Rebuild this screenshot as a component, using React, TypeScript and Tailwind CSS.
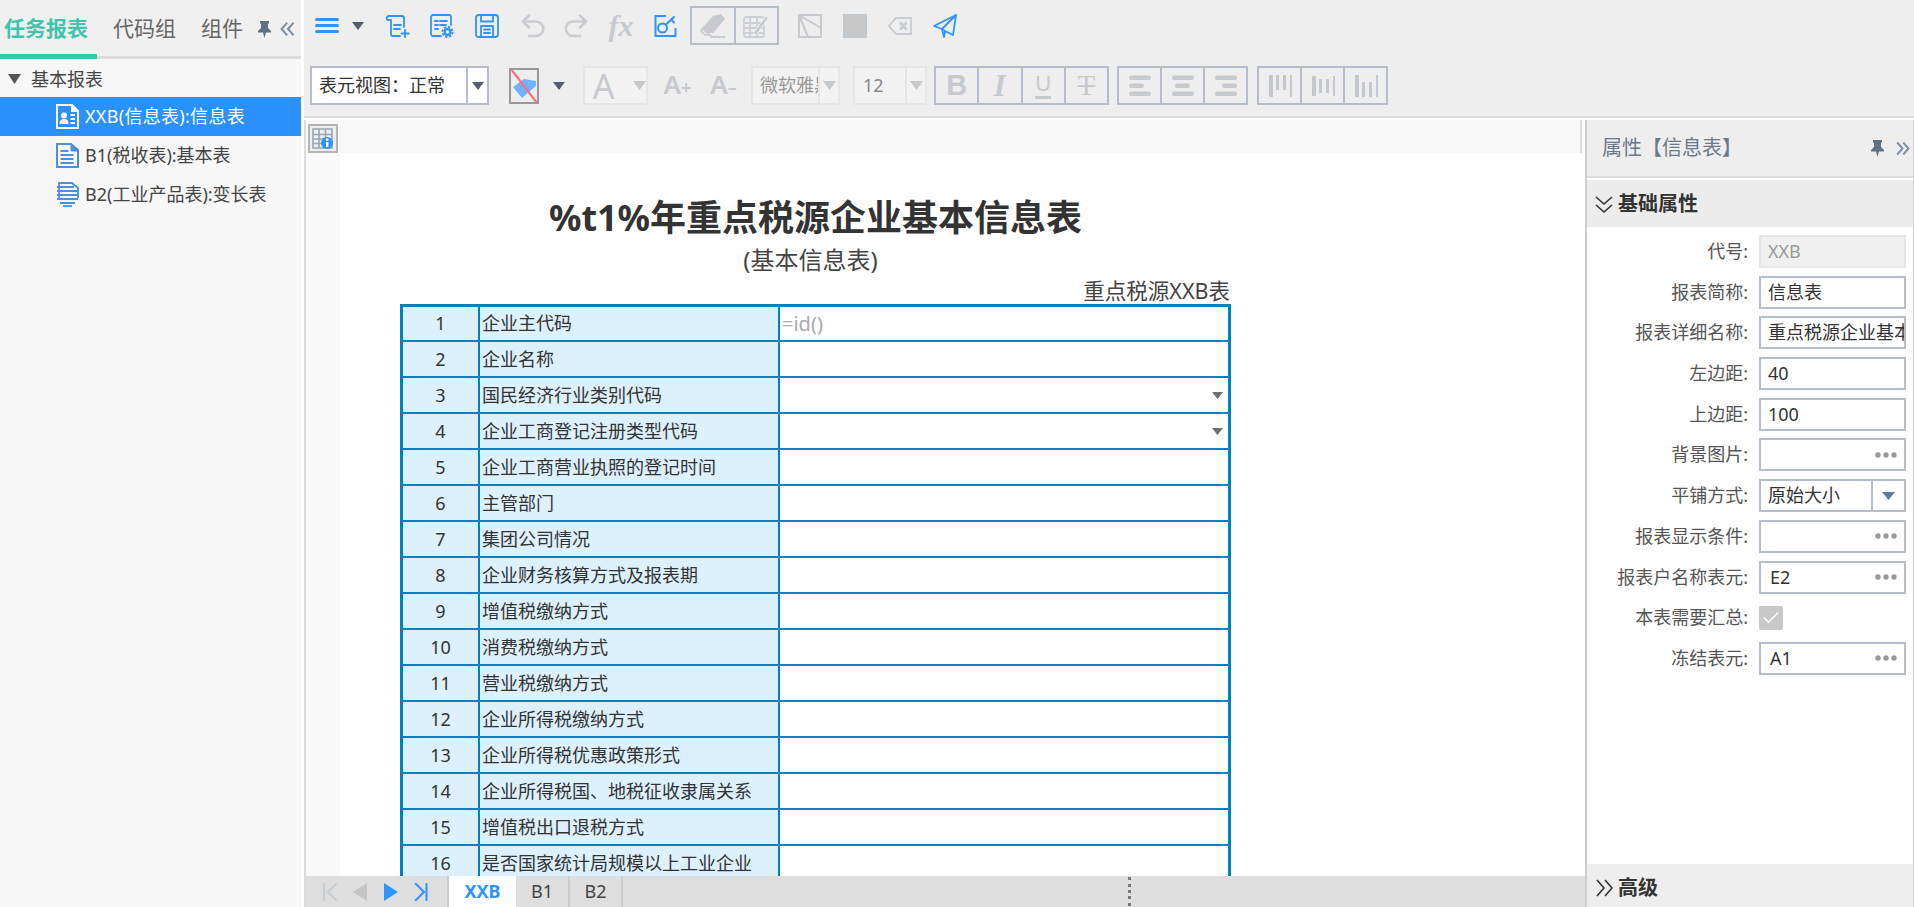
import { Check } from "lucide-react";
import type { ReactNode } from "react";

const FONT = "font-['Noto_Sans','Noto_Sans_CJK_SC',sans-serif]";
const BLUE = "#2f93ff";
const GRAY = "#c6c9cd";

const rows: [string, string, boolean][] = [
  ["企业主代码", "=id()", false],
  ["企业名称", "", false],
  ["国民经济行业类别代码", "", true],
  ["企业工商登记注册类型代码", "", true],
  ["企业工商营业执照的登记时间", "", false],
  ["主管部门", "", false],
  ["集团公司情况", "", false],
  ["企业财务核算方式及报表期", "", false],
  ["增值税缴纳方式", "", false],
  ["消费税缴纳方式", "", false],
  ["营业税缴纳方式", "", false],
  ["企业所得税缴纳方式", "", false],
  ["企业所得税优惠政策形式", "", false],
  ["企业所得税国、地税征收隶属关系", "", false],
  ["增值税出口退税方式", "", false],
  ["是否国家统计局规模以上工业企业", "", false],
];

function Tri({ color, w = 12, h = 8 }: { color: string; w?: number; h?: number }) {
  return (
    <svg width={w} height={h} viewBox="0 0 12 8" className="block shrink-0" preserveAspectRatio="none">
      <path d="M0 0h12L6 8z" fill={color} />
    </svg>
  );
}

function Pin() {
  return (
    <svg width="13" height="17" viewBox="0 0 13 17" className="block">
      <path d="M2 0h9v2L10 3v4l3 3v1.500H8L6.500 17 5 11.500H0V10l3-3V3L2 2z" fill="#5f7183" />
    </svg>
  );
}

function DoubleChevron({ dir, color, sw, size }: { dir: "left" | "right" | "down"; color: string; sw: number; size: number }) {
  const d =
    dir === "left"
      ? "M9 2 2 10l7 8M17 2l-7 8 7 8"
      : dir === "right"
        ? "M3 2l7 8-7 8M11 2l7 8-7 8"
        : "M2 3l8 7 8-7M2 11l8 7 8-7";
  return (
    <svg width={size} height={size} viewBox="0 0 20 20" fill="none" stroke={color} strokeWidth={sw} strokeLinejoin="miter" className="block shrink-0">
      <path d={d} />
    </svg>
  );
}

function Dots() {
  return (
    <svg width="22" height="6" viewBox="0 0 22 6" className="block shrink-0">
      <circle cx="3" cy="3" r="2.700" fill="#999" />
      <circle cx="11" cy="3" r="2.700" fill="#999" />
      <circle cx="19" cy="3" r="2.700" fill="#999" />
    </svg>
  );
}

function Svg24({ children, stroke = BLUE, sw = 1.8 }: { children: ReactNode; stroke?: string; sw?: number }) {
  return (
    <svg width="24" height="24" viewBox="0 0 24 24" fill="none" stroke={stroke} strokeWidth={sw} strokeLinecap="round" strokeLinejoin="round" className="block shrink-0">
      {children}
    </svg>
  );
}

function Slot({ ml, children, w = 24 }: { ml: string; children: ReactNode; w?: number }) {
  return (
    <div className={`${ml} flex items-center justify-center shrink-0`} style={{ width: w }}>
      {children}
    </div>
  );
}

function Cell({ children, last }: { children: ReactNode; last?: boolean }) {
  return (
    <div className={`flex-1 h-full flex items-center justify-center ${last ? "" : "border-r-2 border-[#b5bdcc]"}`}>
      {children}
    </div>
  );
}

function Bars({ rows: r }: { rows: [number, number][] }) {
  return (
    <svg width="24" height="24" viewBox="0 0 24 24" className="block">
      {r.map(([x, w], i) => (
        <rect key={i} x={x} y={1.500 + i * 8} width={w} height="4.500" rx="2.200" fill={GRAY} />
      ))}
    </svg>
  );
}

function VBars({ cols }: { cols: [number, number][] }) {
  return (
    <svg width="24" height="24" viewBox="0 0 24 24" className="block">
      {cols.map(([y, h], i) => (
        <rect key={i} x={1 + i * 7} y={y} width={i === 0 || i === 3 ? 4 : 3} height={h} fill="#c4c8cc" />
      ))}
    </svg>
  );
}

function PropRow({ label, children }: { label: string; children: ReactNode }) {
  return (
    <div className="flex items-center h-[33px]">
      <div className="w-[161px] text-right text-[18px] leading-[33px] text-[#555] whitespace-nowrap">{label}</div>
      <div className="ml-[11px] w-[147px] h-full">{children}</div>
    </div>
  );
}

function Input({ value, dots, pl = "pl-[7px]" }: { value?: string; dots?: boolean; pl?: string }) {
  return (
    <div className={`h-full border-2 border-[#b5bdcc] bg-white flex items-center ${pl} overflow-hidden`}>
      <span className="flex-1 text-[18px] text-[#333] whitespace-nowrap overflow-hidden">{value}</span>
      {dots && <div className="mr-[7px]"><Dots /></div>}
    </div>
  );
}

export default function App() {
  return (
    <div className={`flex h-screen w-screen overflow-hidden bg-white text-[#333] ${FONT}`}>
      {/* left sidebar */}
      <aside className="w-[301px] shrink-0 mr-[3px] bg-[#f7f7f7] flex flex-col">
        <div className="h-[59px] bg-[#f0f0f0] border-b-[3px] border-[#dcdcdc] flex relative">
          <div className="flex items-center h-[56px] pt-[2px] pl-[4px] w-full">
            <span className="text-[21px] font-bold text-[#3fc4ae] whitespace-nowrap">任务报表</span>
            <span className="ml-[25px] text-[21px] text-[#666] whitespace-nowrap">代码组</span>
            <span className="ml-[25px] text-[21px] text-[#666] whitespace-nowrap">组件</span>
            <div className="ml-[15px]"><Pin /></div>
            <div className="ml-[9px]"><DoubleChevron dir="left" color="#7f90a4" sw={2.600} size={16} /></div>
          </div>
          <div className="absolute left-0 bottom-[-3px] w-[97px] h-[5px] bg-[#3fc4ae]" />
        </div>
        <div className="h-[38px] flex items-center pl-[8px] pt-[2px]">
          <Tri color="#555" w={13} h={10} />
          <span className="ml-[10px] text-[18px] text-[#444]">基本报表</span>
        </div>
        <div className="h-[39px] bg-[#2b91ff] flex items-center pl-[56px] text-white">
          <svg width="23" height="25" viewBox="0 0 23 25" className="block shrink-0" fill="none">
            <path d="M1 1h15l6 6v17H1z" fill="#2b91ff" stroke="#fff" strokeWidth="2" />
            <path d="M15 1v7h7" fill="#fff" />
            <circle cx="8" cy="11.500" r="3" fill="#fff" />
            <path d="M3.500 20c0-4 2-5 4.500-5s4.500 1 4.500 5z" fill="#fff" />
            <path d="M14.500 11h4.500M14.500 15h4.500M14.500 19h4.500" stroke="#fff" strokeWidth="1.800" />
          </svg>
          <span className="ml-[6px] text-[18px] tracking-[0.3px] whitespace-nowrap">XXB(信息表):信息表</span>
        </div>
        <div className="h-[39px] flex items-center pl-[56px]">
          <svg width="23" height="25" viewBox="0 0 23 25" className="block shrink-0" fill="none" stroke="#4a8fe0">
            <path d="M1 1h14l7 6v17H1z" strokeWidth="2" />
            <path d="M15 1v7h7z" fill="#4a8fe0" strokeWidth="1" />
            <path d="M4.500 8h8M4.500 12h13M4.500 16h13M4.500 20h13" strokeWidth="2" />
          </svg>
          <span className="ml-[6px] text-[18px] text-[#444] whitespace-nowrap">B1(税收表):基本表</span>
        </div>
        <div className="h-[39px] flex items-center pl-[56px]">
          <svg width="23" height="25" viewBox="0 0 23 25" className="block shrink-0" fill="none" stroke="#4a8fe0">
            <path d="M3 16V1h13l6 5v10" strokeWidth="1.800" />
            <path d="M1 5h17M1 9h21M1 13h21M1 17h21M4 21h15M7 24.200h9" strokeWidth="2" />
          </svg>
          <span className="ml-[6px] text-[18px] text-[#444] whitespace-nowrap">B2(工业产品表):变长表</span>
        </div>
      </aside>

      {/* main column */}
      <div className="flex-1 min-w-0 flex flex-col">
        {/* toolbars */}
        <header className="h-[118px] shrink-0 bg-[#eee] border-b-2 border-[#dcdcdc] pt-[6px]">
          <div className="flex items-center h-[39px]">
            <Slot ml="ml-[11px]">
              <div className="w-[24px] flex flex-col gap-[2.500px]">
                <div className="h-[3.500px] bg-[#2f93ff] rounded-sm" />
                <div className="h-[3.500px] bg-[#2f93ff] rounded-sm" />
                <div className="h-[3.500px] bg-[#2f93ff] rounded-sm" />
              </div>
            </Slot>
            <Slot ml="ml-[13px]" w={12}><Tri color="#555e6e" /></Slot>
            <Slot ml="ml-[22px]">
              <Svg24>
                <path d="M3 2h13a2 2 0 0 1 2 2v9" />
                <path d="M3 2a2.200 2.200 0 0 0-1.500 3.800H5V20a2 2 0 0 0 2 2h7" />
                <path d="M8 11h7M8 15h6" />
                <path d="M19 16v7M15.500 19.500h7.500" />
              </Svg24>
            </Slot>
            <Slot ml="ml-[20px]">
              <Svg24>
                <path d="M11 22H3a2 2 0 0 1-2-2V3a2 2 0 0 1 2-2h16a2 2 0 0 1 2 2v8" />
                <path d="M5 7h3M10 7h7M5 11h3M10 11h6M5 15h3" />
                <circle cx="17.500" cy="18" r="2.800" strokeWidth="2.200" />
                <circle cx="17.500" cy="18" r="5" strokeWidth="2" strokeDasharray="2.200 1.700" strokeLinecap="butt" />
              </Svg24>
            </Slot>
            <Slot ml="ml-[21px]">
              <Svg24>
                <rect x="1" y="1" width="22" height="22" rx="2.500" />
                <path d="M6 1v6.500h12V1" />
                <path d="M6 23V12h12v11" />
                <path d="M9 15.500h6M9 19h6" />
              </Svg24>
            </Slot>
            <Slot ml="ml-[22px]">
              <Svg24 stroke="#c9ccd0" sw={2.600}>
                <path d="M8 1.500 2 7.500l6 6" />
                <path d="M2 7.500h13a7.200 7.200 0 0 1 0 14.500H8" />
              </Svg24>
            </Slot>
            <Slot ml="ml-[19px]">
              <Svg24 stroke="#c9ccd0" sw={2.600}>
                <path d="M16 1.500l6 6-6 6" />
                <path d="M22 7.500H9a7.200 7.200 0 0 0 0 14.500h7" />
              </Svg24>
            </Slot>
            <Slot ml="ml-[21px]">
              <span className="font-['Liberation_Serif',serif] italic font-bold text-[30px] leading-none text-[#c6c9cd]">fx</span>
            </Slot>
            <Slot ml="ml-[21px]">
              <Svg24 sw={2}>
                <path d="M12 2H1.500v20h20V14" strokeLinecap="butt" strokeLinejoin="miter" />
                <circle cx="8.500" cy="14" r="4.500" />
                <path d="M12 10.500 20 3M17 5.500l3 3" />
              </Svg24>
            </Slot>
            <div className="ml-[12px] w-[89px] h-[39px] border-2 border-[#b5bdcc] flex">
              <Cell>
                <svg width="28" height="28" viewBox="0 0 28 28" className="block" fill="none">
                  <path d="M14 4 22 2l4 5-12 14-5 0-6-5z" fill="#c6c9cd" />
                  <path d="M3 17l8 6H6l-4-4z" fill="#eee" stroke="#c6c9cd" strokeWidth="1.500" />
                  <path d="M11 25h15" stroke="#c6c9cd" strokeWidth="1.800" />
                </svg>
              </Cell>
              <Cell last>
                <svg width="26" height="26" viewBox="0 0 26 26" className="block" fill="none" stroke="#ccd0d4" strokeWidth="1.800">
                  <rect x="1" y="4" width="20" height="20" rx="2" />
                  <path d="M1 10h20M1 15h20M1 20h20M7 4v20M14 4v20" />
                  <path d="M11 19 23 3l2.500 2L14 21l-4 1z" fill="#c6c9cd" stroke="#eee" strokeWidth="1" />
                </svg>
              </Cell>
            </div>
            <Slot ml="ml-[19px]">
              <svg width="24" height="24" viewBox="0 0 24 24" className="block" fill="none" stroke="#c6c9cd" strokeWidth="2">
                <rect x="1" y="1" width="22" height="22" />
                <path d="M1 1 23 14M1 1l9 22M1 1l15 0" />
              </svg>
            </Slot>
            <Slot ml="ml-[21px]">
              <div className="w-[24px] h-[24px] bg-[#c8c8c8] border-2 border-[#c0c8cf]" />
            </Slot>
            <Slot ml="ml-[21px]">
              <svg width="24" height="20" viewBox="0 0 24 20" className="block" fill="none" stroke="#c8ccd0" strokeWidth="1.800">
                <path d="M8 2h15v16H8L1 10z" />
                <path d="M12 6.500l6.500 7M18.500 6.500l-6.500 7" strokeWidth="2.800" />
              </svg>
            </Slot>
            <Slot ml="ml-[21px]">
              <svg width="24" height="24" viewBox="0 0 24 24" className="block" fill="none" stroke={BLUE} strokeWidth="1.800" strokeLinejoin="round">
                <path d="M23 1 1 12l8 3 2 8 1-6 8 4z" />
                <path d="M23 1 9 15l3 2" />
              </svg>
            </Slot>
          </div>

          <div className="flex items-center h-[39px] mt-[21px]">
            {/* cell view select */}
            <div className="ml-[6px] w-[179px] h-[39px] border-2 border-[#b5bdcc] bg-white flex items-center">
              <span className="flex-1 pl-[7px] text-[18px] text-[#333] whitespace-nowrap">表元视图：正常</span>
              <div className="w-[21px] h-full border-l-2 border-[#b5bdcc] flex items-center justify-center"><Tri color="#555e6e" /></div>
            </div>
            <div className="ml-[20px] w-[30px] h-[36px] border-2 border-[#999] relative overflow-hidden flex items-center justify-center">
              <svg width="26" height="32" viewBox="0 0 26 32" className="block">
                <path d="M2 17 13 9l12 2v5L11 28z" fill="#6cb4ff" />
                <path d="M-3-5 29 37" stroke="#ff6b78" strokeWidth="2.200" />
              </svg>
            </div>
            <Slot ml="ml-[14px]" w={12}><Tri color="#555e6e" /></Slot>
            <div className="ml-[18px] w-[65px] h-[39px] border-2 border-[#e6e6e6] bg-[#f2f2f2] flex items-center">
              <span className="ml-[3px] w-[32px] text-[34px] leading-none text-[#c6c9cd] text-center">A</span>
              <div className="ml-[14px]"><Tri color="#c8c8c8" w={13} h={9} /></div>
            </div>
            <div className="ml-[17px] -mt-[3px] w-[25px] flex items-baseline justify-center text-[#c6c9cd] font-semibold whitespace-nowrap">
              <span className="text-[26px] leading-none">A</span><span className="text-[18px] leading-none font-bold">+</span>
            </div>
            <div className="ml-[21px] -mt-[3px] w-[25px] flex items-baseline justify-center text-[#c6c9cd] font-semibold whitespace-nowrap">
              <span className="text-[26px] leading-none">A</span><span className="text-[18px] leading-none font-bold">–</span>
            </div>
            <div className="ml-[15px] w-[89px] h-[39px] border-2 border-[#e6e6e6] bg-[#f2f2f2] flex items-center">
              <div className="w-[65px] pl-[7px] overflow-hidden text-[18px] text-[#999] whitespace-nowrap">微软雅黑</div>
              <div className="flex-1 h-full border-l-2 border-[#e6e6e6] flex items-center justify-center"><Tri color="#c8c8c8" w={13} h={9} /></div>
            </div>
            <div className="ml-[13px] w-[74px] h-[39px] border-2 border-[#e6e6e6] bg-[#f2f2f2] flex items-center">
              <div className="w-[50px] pl-[8px] text-[18px] text-[#888]">12</div>
              <div className="flex-1 h-full border-l-2 border-[#e6e6e6] flex items-center justify-center"><Tri color="#c8c8c8" w={13} h={9} /></div>
            </div>
            <div className="ml-[7px] w-[175px] h-[39px] border-2 border-[#b5bdcc] flex">
              <Cell><span className="font-['Liberation_Sans',sans-serif] font-bold text-[29px] leading-none text-[#c6c9cd]">B</span></Cell>
              <Cell><span className="font-['Liberation_Serif',serif] italic font-bold text-[31px] leading-none text-[#c6c9cd]">I</span></Cell>
              <Cell><span className="font-['Liberation_Sans',sans-serif] text-[22px] leading-none text-[#c6c9cd] border-b-[3px] border-[#c6c9cd] pb-[1px]">U</span></Cell>
              <Cell last><span className="font-['Liberation_Serif',serif] text-[29px] leading-none text-[#c6c9cd] line-through">T</span></Cell>
            </div>
            <div className="ml-[8px] w-[131px] h-[39px] border-2 border-[#b5bdcc] flex">
              <Cell><Bars rows={[[1, 22], [1, 15], [1, 22]]} /></Cell>
              <Cell><Bars rows={[[1, 22], [4, 15], [1, 22]]} /></Cell>
              <Cell last><Bars rows={[[1, 22], [8, 15], [1, 22]]} /></Cell>
            </div>
            <div className="ml-[9px] w-[131px] h-[39px] border-2 border-[#b5bdcc] flex">
              <Cell><VBars cols={[[1, 22], [1, 15], [1, 15], [1, 22]]} /></Cell>
              <Cell><VBars cols={[[2, 20], [5, 14], [5, 14], [2, 20]]} /></Cell>
              <Cell last><VBars cols={[[1, 22], [8, 15], [8, 15], [1, 22]]} /></Cell>
            </div>
          </div>
        </header>

        <div className="flex-1 min-h-0 flex pt-[2px]">
          {/* centre */}
          <section className="w-[1281px] shrink-0 flex flex-col border-l-2 border-[#dcdcdc] min-h-0">
            <div className="h-[33px] shrink-0 bg-[#f9f9f9] flex items-start pt-[4px] pl-[2px] pr-[3px] justify-between">
              <div className="w-[30px] h-[29px] border-2 border-[#b4b4b4] bg-[#eee] flex items-center justify-center">
                <svg width="22" height="22" viewBox="0 0 22 22" className="block">
                  <path d="M1 1h19v19H1zM1 6.500h19M1 11h19M1 15.500h19M7 1v19M13.500 1v19" fill="none" stroke="#9aa5b5" strokeWidth="1.600" />
                  <circle cx="15" cy="15" r="6" fill="#2f93ff" />
                  <rect x="14" y="14" width="2.400" height="5" fill="#fff" />
                  <rect x="14" y="10.500" width="2.400" height="2.200" fill="#fff" />
                </svg>
              </div>
              <div className="w-[2px] h-[33px] -mt-[4px] bg-[#dcdcdc]" />
            </div>
            <div className="flex-1 min-h-0 flex overflow-hidden">
              <div className="w-[34px] shrink-0 bg-[#f9f9f9]" />
              <div className="flex-1 bg-white pl-[60px] overflow-hidden">
                <div className="w-[831px]">
                  <h1 className="mt-[42px] h-[46px] text-center text-[36px] leading-[46px] font-bold text-[#333] whitespace-nowrap">%t1%年重点税源企业基本信息表</h1>
                  <div className="mt-[3px] h-[32px] pr-[10px] text-center text-[24px] leading-[32px] text-[#444]">(基本信息表)</div>
                  <div className="mt-[2px] h-[26px] text-right text-[21.500px] leading-[26px] pr-[1px] text-[#444] whitespace-nowrap">重点税源XXB表</div>
                  <div className="border-[3px] border-[#0081c6] border-b-0 text-[18px] text-[#333]">
                    {rows.map(([label, value, dd], i) => (
                      <div key={i} className={`flex border-b-2 border-[#0081c6] ${i === 0 ? "h-[35px]" : "h-[36px]"}`}>
                        <div className="w-[77px] shrink-0 bg-[#dcf0fe] border-r-2 border-[#0081c6] flex items-center justify-center">{i + 1}</div>
                        <div className="w-[300px] shrink-0 bg-[#dcf0fe] border-r-2 border-[#0081c6] flex items-center pl-[2px] whitespace-nowrap">{label}</div>
                        <div className="flex-1 flex items-center justify-between pl-[2px] pr-[5px] text-[20px] text-[#aaa]">
                          <span>{value}</span>
                          {dd && <Tri color="#6b7078" w={11} h={7} />}
                        </div>
                      </div>
                    ))}
                  </div>
                </div>
              </div>
            </div>
            {/* sheet tabs */}
            <footer className="h-[31px] shrink-0 bg-[#dedede] flex items-stretch">
              <div className="ml-[16px] flex items-center">
                <svg width="16" height="18" viewBox="0 0 16 18" className="block" fill="none" stroke="#c8ccd0" strokeWidth="2">
                  <path d="M2 0v18M15 0 6 9l9 9" />
                </svg>
                <svg width="16" height="18" viewBox="0 0 16 18" className="block ml-[14px]">
                  <path d="M15 0v18L1 9z" fill="#c4c4c4" />
                </svg>
                <svg width="16" height="18" viewBox="0 0 16 18" className="block ml-[15px]">
                  <path d="M1 0v18L15 9z" fill={BLUE} />
                </svg>
                <svg width="14" height="18" viewBox="0 0 14 18" className="block ml-[15px]" fill="none" stroke={BLUE} strokeWidth="2">
                  <path d="M12.500 0v18M1 0l9 9-9 9" />
                </svg>
              </div>
              <div className="ml-[19px] w-[69px] bg-white border-l-2 border-[#ccc] flex items-center justify-center text-[18px] font-bold text-[#2f93ff]">XXB</div>
              <div className="w-[54px] border-r-2 border-[#ccc] flex items-center justify-center text-[18px] text-[#444]">B1</div>
              <div className="w-[53px] border-r-2 border-[#ccc] flex items-center justify-center text-[18px] text-[#444]">B2</div>
              <div className="flex-1" />
              <div className="w-[3px] border-l-[3px] border-dotted border-[#777] mr-[4px] my-[1px]" />
              <div className="w-[447px] mr-[3px]" />
            </footer>
          </section>

          {/* property panel */}
          <aside className="flex-1 min-w-0 border-l-2 border-r border-[#cdcdcd] flex flex-col">
            <div className="h-[58px] shrink-0 bg-[#eee] border-b-2 border-[#dcdcdc] flex items-center pl-[15px]">
              <span className="text-[20px] text-[#6b7888] whitespace-nowrap">属性【信息表】</span>
              <div className="ml-[129px]"><Pin /></div>
              <div className="ml-[11px]"><DoubleChevron dir="right" color="#7f90a4" sw={2.600} size={15} /></div>
            </div>
            <div className="mt-[2px] h-[47px] shrink-0 bg-[#ececec] flex items-center pl-[7px]">
              <DoubleChevron dir="down" color="#333" sw={1.600} size={20} />
              <span className="ml-[4px] text-[20px] font-bold text-[#333]">基础属性</span>
            </div>
            <div className="mt-[8px] flex flex-col gap-[7.700px]">
              <PropRow label="代号:">
                <div className="h-full border-2 border-[#e6e6e6] bg-[#f0f0f0] flex items-center pl-[7px] text-[18px] text-[#999]">XXB</div>
              </PropRow>
              <PropRow label="报表简称:"><Input value="信息表" /></PropRow>
              <PropRow label="报表详细名称:"><Input value="重点税源企业基本信息表" /></PropRow>
              <PropRow label="左边距:"><Input value="40" /></PropRow>
              <PropRow label="上边距:"><Input value="100" /></PropRow>
              <PropRow label="背景图片:"><Input dots /></PropRow>
              <PropRow label="平铺方式:">
                <div className="h-full border-2 border-[#b5bdcc] bg-white flex items-center">
                  <span className="flex-1 pl-[7px] text-[18px] text-[#333] whitespace-nowrap">原始大小</span>
                  <div className="w-[33px] h-full border-l-2 border-[#b5bdcc] flex items-center justify-center"><Tri color="#5c7a9e" w={13} h={8} /></div>
                </div>
              </PropRow>
              <PropRow label="报表显示条件:"><Input dots /></PropRow>
              <PropRow label="报表户名称表元:"><Input value="E2" dots pl="pl-[9px]" /></PropRow>
              <PropRow label="本表需要汇总:">
                <div className="h-full flex items-center">
                  <div className="w-[24px] h-[24px] bg-[#c8c8c8] rounded-[2px] flex items-center justify-center">
                    <Check size={20} color="#fff" strokeWidth={1.800} />
                  </div>
                </div>
              </PropRow>
              <PropRow label="冻结表元:"><Input value="A1" dots pl="pl-[9px]" /></PropRow>
            </div>
            <div className="mt-auto h-[43px] shrink-0 bg-[#eee] flex items-center pl-[7px] pt-[4px]">
              <DoubleChevron dir="right" color="#333" sw={1.600} size={20} />
              <span className="ml-[4px] text-[20px] font-bold text-[#333]">高级</span>
            </div>
          </aside>
        </div>
      </div>
    </div>
  );
}
